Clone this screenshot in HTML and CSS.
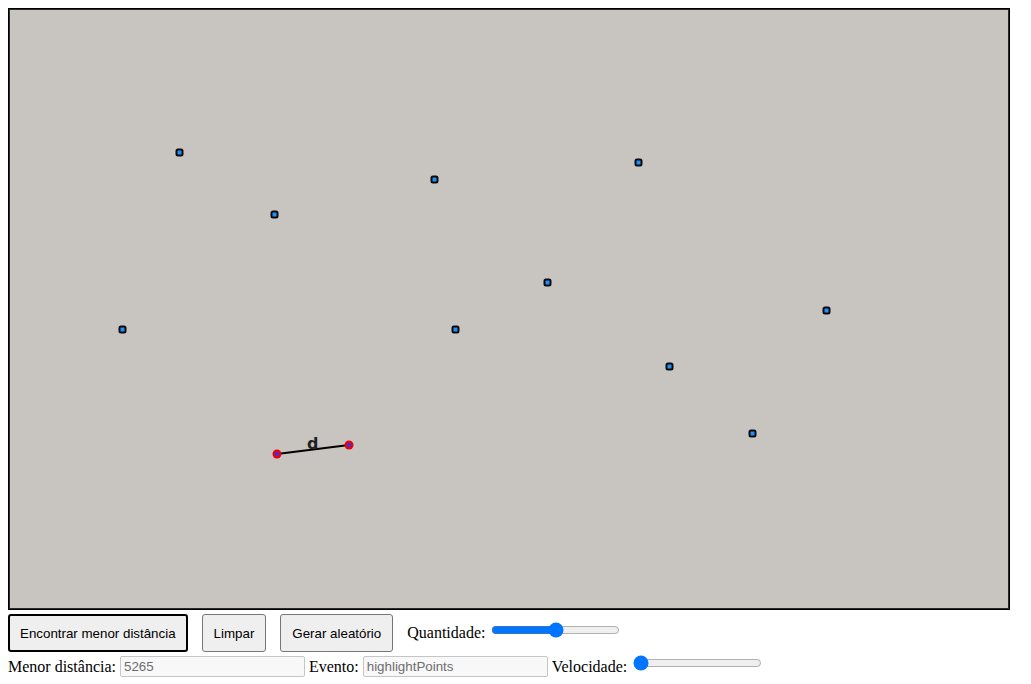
FILE: index.html
```html
<!DOCTYPE html>
<html lang="pt">
<head>
<meta charset="utf-8">
<title>Par de pontos mais próximos</title>
<link rel="stylesheet" href="styles.css">
</head>
<body>
<div class="board">
  <svg class="plot" width="1000" height="600" viewBox="0 0 1000 600" xmlns="http://www.w3.org/2000/svg">
    <g class="pt">
      <rect x="167.5" y="140.5" width="6" height="6" rx="1.5"/>
      <rect x="262.5" y="202.5" width="6" height="6" rx="1.5"/>
      <rect x="422.5" y="167.5" width="6" height="6" rx="1.5"/>
      <rect x="626.5" y="150.5" width="6" height="6" rx="1.5"/>
      <rect x="535.5" y="270.5" width="6" height="6" rx="1.5"/>
      <rect x="110.5" y="317.5" width="6" height="6" rx="1.5"/>
      <rect x="443.5" y="317.5" width="6" height="6" rx="1.5"/>
      <rect x="814.5" y="298.5" width="6" height="6" rx="1.5"/>
      <rect x="657.5" y="354.5" width="6" height="6" rx="1.5"/>
      <rect x="740.5" y="421.5" width="6" height="6" rx="1.5"/>
    </g>
    <line x1="268" y1="445" x2="340" y2="436" stroke="#000" stroke-width="2"/>
    <circle cx="268" cy="445" r="4.5" fill="#e8000b"/>
    <circle cx="340" cy="436" r="4.5" fill="#e8000b"/>
    <circle cx="268" cy="445" r="2" fill="#1a3cff"/>
    <circle cx="340" cy="436" r="2" fill="#1a3cff"/>
    <text x="298" y="440" class="lbl">d</text>
  </svg>
</div>
<div class="row row-actions">
  <button class="btn btn-focus" type="button">Encontrar menor distância</button>
  <button class="btn" type="button">Limpar</button>
  <button class="btn" type="button">Gerar aleatório</button>
  <label class="lab">Quantidade:</label>
  <input class="range range-up" type="range" min="0" max="100" value="50">
</div>
<div class="row row-info">
  <label class="lab">Menor distância:</label>
  <input class="field" type="text" value="5265" disabled>
  <label class="lab">Evento:</label>
  <input class="field" type="text" value="highlightPoints" disabled>
  <label class="lab">Velocidade:</label>
  <input class="range range-low" type="range" min="0" max="100" value="0">
</div>
</body>
</html>
```
FILE: styles.css
```css
html, body {
  margin: 0;
  padding: 0;
  background: #fff;
}
body {
  margin: 8px;
  font-family: "Liberation Serif", "Times New Roman", serif;
  font-size: 16px;
  color: #000;
}
.board {
  width: 1000px;
  height: 600px;
  border: 1px solid #000;
  background: #c8c5c0;
  box-shadow: inset 0 0 0 1px #2a2a2a;
}
.plot {
  display: block;
}
.pt rect {
  fill: #1e8fff;
  stroke: #0a0a0a;
  stroke-width: 2;
}
.lbl {
  font-family: "DejaVu Sans", "Liberation Sans", sans-serif;
  font-size: 16px;
  font-weight: 600;
  fill: #222;
}
.row {
  display: flex;
  align-items: center;
}
.row-actions {
  margin-top: 4px;
  height: 38px;
}
.btn {
  font-family: "Liberation Sans", Arial, sans-serif;
  font-size: 13.33px;
  color: #000;
  background: #efefef;
  border: 1px solid #767676;
  border-radius: 3px;
  height: 38px;
  padding: 0 11px;
  margin-right: 14px;
  box-sizing: border-box;
}
.btn-focus {
  border: 2px solid #000;
  padding: 0 10px;
}
.lab {
  white-space: pre;
}
.range {
  width: 129px;
  margin: 0 0 0 6px;
  accent-color: #0075ff;
}
.range-up {
  margin-top: -6px;
}
.range-low {
  margin-top: -7px;
}
.row-info {
  margin-top: 4px;
  height: 21px;
}
.field {
  width: 185px;
  height: 21px;
  box-sizing: border-box;
  margin: 0 4px;
  padding: 1px 3px;
  font-family: "Liberation Sans", Arial, sans-serif;
  font-size: 13.33px;
  color: #6d6d6d;
  background: #f8f8f8;
  border: 1px solid #c6c6c6;
  border-radius: 2px;
}
```
